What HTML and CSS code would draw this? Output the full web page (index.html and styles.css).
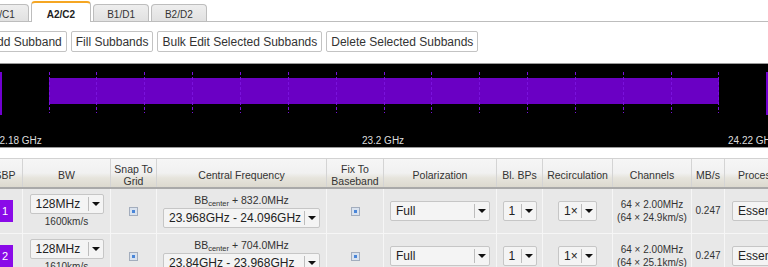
FILE: index.html
```html
<!DOCTYPE html>
<html>
<head>
<meta charset="utf-8">
<title>Spectral Setup</title>
<link rel="stylesheet" href="styles.css">
</head>
<body>
<div class="tabs">
  <div class="tab">A1/C1</div>
  <div class="tab active">A2/C2</div>
  <div class="tab">B1/D1</div>
  <div class="tab">B2/D2</div>
</div>
<div class="toolbar">
  <button class="btn">Add Subband</button>
  <button class="btn">Fill Subbands</button>
  <button class="btn">Bulk Edit Selected Subbands</button>
  <button class="btn">Delete Selected Subbands</button>
</div>
<div class="spectrum">
  <svg viewBox="0 0 768 83" width="768" height="83">
    <rect x="0" y="8" width="2" height="43" fill="#7000d0"/>
    <rect x="766" y="8" width="2" height="43" fill="#7000d0"/>
    <rect x="49" y="14" width="670" height="26" fill="#6a00c4"/>
    <g stroke="#7a12dc" stroke-width="1" stroke-dasharray="3 2">
      <line x1="49.5" y1="8" x2="49.5" y2="49"/>
      <line x1="96.5" y1="8" x2="96.5" y2="49"/>
      <line x1="144.5" y1="8" x2="144.5" y2="49"/>
      <line x1="192.5" y1="8" x2="192.5" y2="49"/>
      <line x1="240.5" y1="8" x2="240.5" y2="49"/>
      <line x1="288.5" y1="8" x2="288.5" y2="49"/>
      <line x1="336.5" y1="8" x2="336.5" y2="49"/>
      <line x1="384.5" y1="8" x2="384.5" y2="49"/>
      <line x1="431.5" y1="8" x2="431.5" y2="49"/>
      <line x1="479.5" y1="8" x2="479.5" y2="49"/>
      <line x1="527.5" y1="8" x2="527.5" y2="49"/>
      <line x1="575.5" y1="8" x2="575.5" y2="49"/>
      <line x1="623.5" y1="8" x2="623.5" y2="49"/>
      <line x1="671.5" y1="8" x2="671.5" y2="49"/>
      <line x1="718.5" y1="8" x2="718.5" y2="49"/>
    </g>
    <g class="axis">
      <text x="-6" y="79.5">22.18 GHz</text>
      <text x="383" y="79.5" text-anchor="middle">23.2 GHz</text>
      <text x="728" y="79.5">24.22 GHz</text>
    </g>
  </svg>
</div>
<div class="grid">
  <div class="row head">
    <div class="hc">SBP</div>
    <div class="hc">BW</div>
    <div class="hc">Snap To<br>Grid</div>
    <div class="hc">Central Frequency</div>
    <div class="hc">Fix To<br>Baseband</div>
    <div class="hc">Polarization</div>
    <div class="hc">Bl. BPs</div>
    <div class="hc">Recirculation</div>
    <div class="hc">Channels</div>
    <div class="hc">MB/s</div>
    <div class="hc">Processing</div>
  </div>
  <div class="row body">
    <div class="c"><span class="sbp">1</span></div>
    <div class="c stack">
      <div class="sel w-bw"><span class="v">128MHz</span><span class="arr"></span></div>
      <span class="sm">1600km/s</span>
    </div>
    <div class="c"><span class="chk"></span></div>
    <div class="c stack">
      <span class="bb">BB<sub>center</sub> + 832.0MHz</span>
      <div class="sel w-cf"><span class="v">23.968GHz - 24.096GHz</span><span class="arr"></span></div>
    </div>
    <div class="c"><span class="chk"></span></div>
    <div class="c"><div class="sel w-pol"><span class="v">Full</span><span class="arr"></span></div></div>
    <div class="c"><div class="sel w-bl"><span class="v">1</span><span class="arr"></span></div></div>
    <div class="c"><div class="sel w-rc"><span class="v">1×</span><span class="arr"></span></div></div>
    <div class="c chan">64 × 2.00MHz<br>(64 × 24.9km/s)</div>
    <div class="c sm">0.247</div>
    <div class="c start"><div class="sel w-pr"><span class="v">Essential</span><span class="arr"></span></div></div>
  </div>
  <div class="row body">
    <div class="c"><span class="sbp">2</span></div>
    <div class="c stack">
      <div class="sel w-bw"><span class="v">128MHz</span><span class="arr"></span></div>
      <span class="sm">1610km/s</span>
    </div>
    <div class="c"><span class="chk"></span></div>
    <div class="c stack">
      <span class="bb">BB<sub>center</sub> + 704.0MHz</span>
      <div class="sel w-cf"><span class="v">23.84GHz - 23.968GHz</span><span class="arr"></span></div>
    </div>
    <div class="c"><span class="chk"></span></div>
    <div class="c"><div class="sel w-pol"><span class="v">Full</span><span class="arr"></span></div></div>
    <div class="c"><div class="sel w-bl"><span class="v">1</span><span class="arr"></span></div></div>
    <div class="c"><div class="sel w-rc"><span class="v">1×</span><span class="arr"></span></div></div>
    <div class="c chan">64 × 2.00MHz<br>(64 × 25.1km/s)</div>
    <div class="c sm">0.247</div>
    <div class="c start"><div class="sel w-pr"><span class="v">Essential</span><span class="arr"></span></div></div>
  </div>
</div>
</body>
</html>
```
FILE: styles.css
```css
html, body {
  margin: 0;
  padding: 0;
  overflow: hidden;
  background: #fff;
}
body {
  width: 768px;
  height: 267px;
  font-family: "Liberation Sans", Arial, sans-serif;
  color: #222;
}

/* Tabs */
.tabs {
  display: flex;
  align-items: flex-end;
  gap: 2px;
  height: 21px;
  border-bottom: 1px solid #bdbdbd;
  margin-left: -27px;
}
.tab {
  box-sizing: border-box;
  flex: none;
  height: 17px;
  padding: 4px 13px 0;
  line-height: 12px;
  font-size: 10px;
  color: #333;
  border: 1px solid #bdbdbd;
  border-bottom: none;
  border-radius: 4px 4px 0 0;
  background: linear-gradient(#eeeeee, #e1e1e1);
}
.tab.active {
  height: 21px;
  margin-bottom: -1px;
  padding: 6px 15px 0;
  border-top: 2px solid #f5a623;
  background: #fff;
  font-weight: bold;
  color: #222;
}

/* Toolbar */
.toolbar {
  display: flex;
  gap: 4px;
  margin: 9px 0 0 -16px;
}
.btn {
  box-sizing: border-box;
  flex: none;
  height: 21px;
  padding: 0 4px;
  border: 1px solid #c3c3c3;
  border-radius: 2px;
  background: #fff;
  font: 12px "Liberation Sans", Arial, sans-serif;
  color: #333;
  white-space: nowrap;
}

/* Spectrum */
.spectrum {
  margin-top: 11px;
  height: 83px;
  background: #000;
  border-top: 1px solid #9a9a9a;
  border-bottom: 1px solid #9a9a9a;
}
.spectrum svg {
  display: block;
  overflow: visible;
}
.axis text {
  font-family: "Liberation Sans", Arial, sans-serif;
  font-size: 10px;
  fill: #dddddd;
}

/* Grid table */
.grid {
  margin: 10px 0 0 -12px;
}
.row {
  display: grid;
  grid-template-columns: 34px 87px 45px 169px 56px 112px 45px 69px 78px 32px 78px;
  column-gap: 1px;
}
.head {
  border-top: 1px solid #d2d2d2;
  border-bottom: 2px solid #a9a9a9;
  background: #d4d4d4;
}
.hc {
  box-sizing: border-box;
  height: 28px;
  padding-top: 4px;
  display: flex;
  align-items: center;
  justify-content: center;
  text-align: center;
  font-size: 10.5px;
  line-height: 12px;
  color: #333;
  white-space: nowrap;
  background: linear-gradient(#f6f6f6 0%, #f1f1f1 50%, #e6e4dc 68%, #dcd9cf 100%);
}
.body {
  background: #f6f6f6;
  border-bottom: 1px solid #f6f6f6;
}
.c {
  height: 44px;
  background: #e8e8e8;
  display: flex;
  align-items: center;
  justify-content: center;
  color: #333;
}
.c.start {
  justify-content: flex-start;
  padding-left: 7px;
}
.stack {
  flex-direction: column;
  gap: 2px;
}
.sm {
  font-size: 10px;
  line-height: 12px;
  color: #333;
}
.chan {
  font-size: 10px;
  line-height: 13px;
  text-align: center;
  white-space: nowrap;
}
.bb {
  font-size: 10.5px;
  line-height: 12px;
  color: #333;
  white-space: nowrap;
}
.bb sub {
  font-size: 7.5px;
  line-height: 0;
  vertical-align: -2px;
}

.sbp {
  width: 16px;
  height: 22px;
  background: #8a0ae8;
  color: #fff;
  font-size: 11px;
  display: flex;
  align-items: center;
  justify-content: center;
}
.chk {
  box-sizing: border-box;
  width: 9px;
  height: 9px;
  border: 1px solid #a3adbd;
  background: #4a86d8;
  box-shadow: inset 0 0 0 2px #d9e2ee;
}

/* Select boxes */
.sel {
  box-sizing: border-box;
  flex: none;
  height: 20px;
  display: flex;
  align-items: stretch;
  border: 1px solid #c6c6c6;
  border-radius: 2px;
  background: #f4f4f4;
  font-size: 12px;
  color: #222;
}
.sel .v {
  flex: 1;
  padding-left: 5px;
  line-height: 18px;
  white-space: nowrap;
  overflow: hidden;
}
.sel .arr {
  flex: none;
  width: 14px;
  margin: 2px 0;
  border-left: 1px solid #bdbdbd;
  display: flex;
  align-items: center;
  justify-content: center;
}
.sel .arr::after {
  content: "";
  border-left: 4px solid transparent;
  border-right: 4px solid transparent;
  border-top: 4px solid #111;
}
.w-bw { width: 74px; }
.w-cf { width: 157px; }
.w-pol { width: 100px; }
.w-bl { width: 34px; }
.w-rc { width: 39px; }
.w-pr { width: 70px; }
```
